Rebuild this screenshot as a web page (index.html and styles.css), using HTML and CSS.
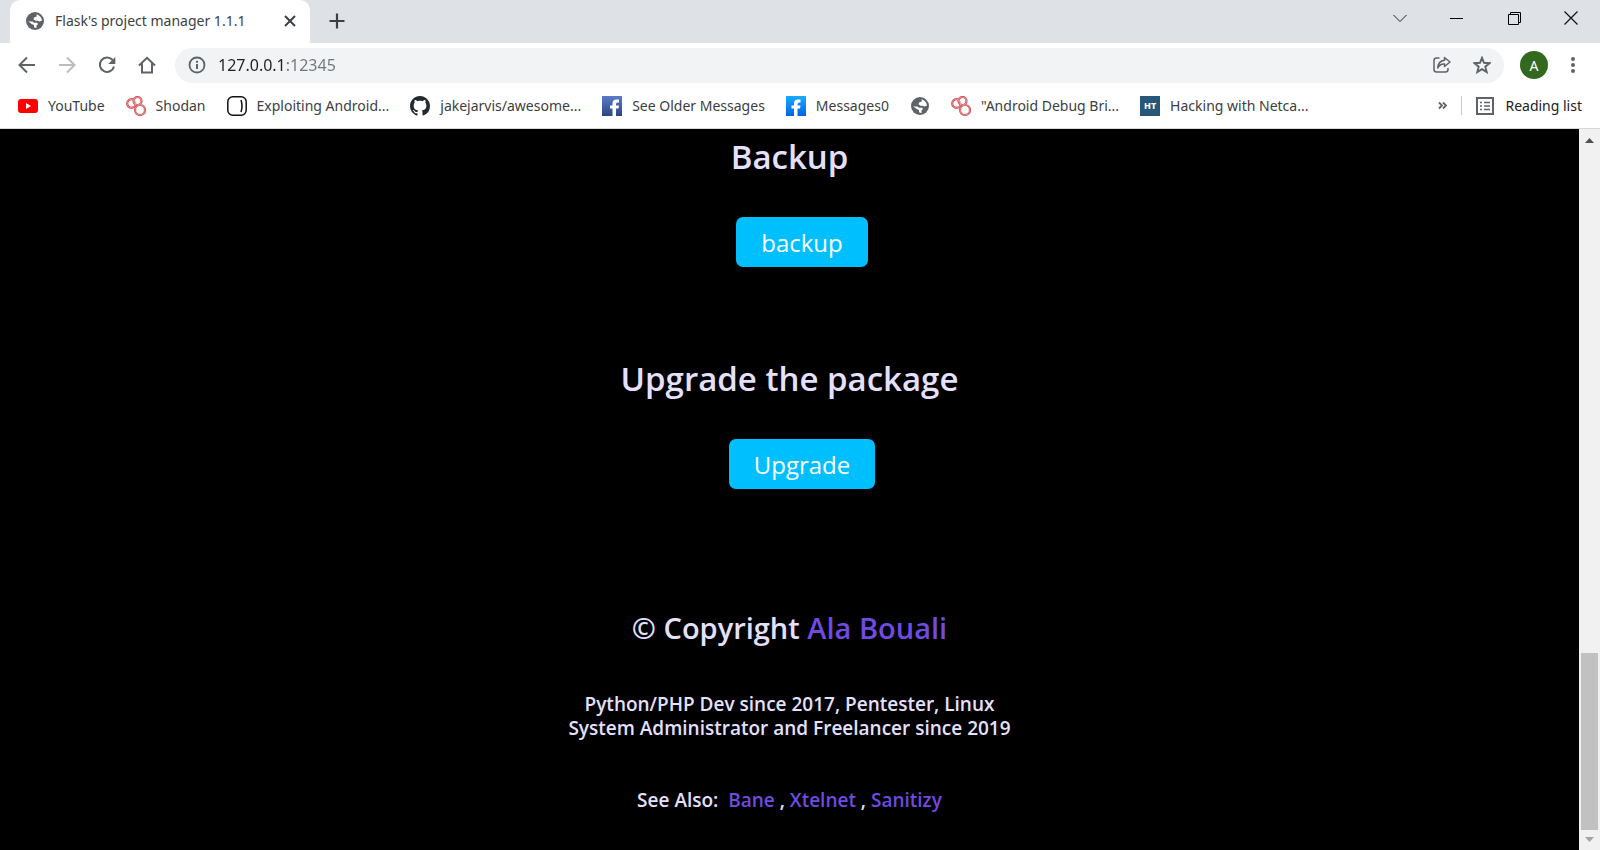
FILE: index.html
```html
<!DOCTYPE html>
<html lang="en">
<head>
<meta charset="utf-8">
<meta name="viewport" content="width=device-width, initial-scale=1">
<title>Flask's project manager 1.1.1</title>
<link rel="stylesheet" href="styles.css">
</head>
<body>
<svg class="symbols" aria-hidden="true">
  <symbol id="globe" viewBox="0 0 18 18">
    <circle cx="9" cy="9" r="9" fill="#5f6368"/>
    <path d="M10.500 2.200Q15.200 3.600 16 8.500L13.500 9.500 11.500 8.800H9.500L7.500 7.200 8 5.500 10.800 4.500Z" fill="#fff"/>
    <path d="M2 9.500H6.500L8 10.800H11L12 12 10.500 13.500V16Q8.500 16 8 15V13L5.500 12 4.500 11Z" fill="#fff"/>
  </symbol>
  <symbol id="shodan" viewBox="0 0 20 20">
    <g fill="#fff" stroke="#d04a50" stroke-width="2.200"><circle cx="5.500" cy="7.500" r="4.300"/><circle cx="11.500" cy="5" r="4"/><circle cx="14" cy="14" r="5"/></g>
    <g fill="none" stroke="#e9a0a4" stroke-width=".8"><circle cx="5.500" cy="7.500" r="4.300"/><circle cx="11.500" cy="5" r="4"/><circle cx="14" cy="14" r="5"/></g>
  </symbol>
</svg>
<header class="browser">
  <div class="tabstrip">
    <div class="tab">
      <svg class="i18"><use href="#globe"/></svg>
      <span class="tab-title">Flask's project manager 1.1.1</span>
      <button class="icon-btn tab-close" aria-label="Close tab"><svg class="i18" viewBox="0 0 18 18"><path d="m4 4 10 10M14 4 4 14" stroke="#3c4043" stroke-width="2"/></svg></button>
    </div>
    <button class="icon-btn new-tab" aria-label="New tab"><svg class="i18" viewBox="0 0 18 18"><path d="M9 1.500v15M1.500 9h15" stroke="#3c4043" stroke-width="2.200"/></svg></button>
    <div class="window-controls">
      <button class="icon-btn" aria-label="Search tabs"><svg viewBox="0 0 14 14"><path d="m.5 4 6.500 6.500L13.500 4" fill="none" stroke="#222"/></svg></button>
      <button class="icon-btn" aria-label="Minimize"><svg viewBox="0 0 14 14"><path d="M0 7.500h13" stroke="#000"/></svg></button>
      <button class="icon-btn" aria-label="Restore"><svg viewBox="0 0 14 14"><path d="M1.500 3.500h10v10h-10zM3.500 3V1.500h10v10H12" fill="none" stroke="#000"/></svg></button>
      <button class="icon-btn" aria-label="Close"><svg viewBox="0 0 14 14"><path d="m.5 .5 13 13M13.500 .5l-13 13" stroke="#111" stroke-width="1.200"/></svg></button>
    </div>
  </div>
  <div class="toolbar">
    <nav class="nav-buttons" aria-label="Navigation">
      <button class="icon-btn" aria-label="Back"><svg class="i18" viewBox="0 0 18 18"><path d="M17 9H2M9 1.500 1.500 9 9 16.500" fill="none" stroke="#5f6368" stroke-width="2"/></svg></button>
      <button class="icon-btn" aria-label="Forward" disabled><svg class="i18" viewBox="0 0 18 18"><path d="M1 9h15M9 1.500 16.500 9 9 16.500" fill="none" stroke="#babcbe" stroke-width="2"/></svg></button>
      <button class="icon-btn" aria-label="Reload"><svg class="i18" viewBox="0 0 18 18"><path d="M14.500 4A7.200 7.200 0 1 0 16 10.500" fill="none" stroke="#5f6368" stroke-width="2"/><path d="M17.300 1v7h-7z" fill="#5f6368"/></svg></button>
      <button class="icon-btn" aria-label="Home"><svg class="i18" viewBox="0 0 18 18"><path d="M1 9.500 9 1.800l8 7.700M4 7.500v9h10v-9" fill="none" stroke="#5f6368" stroke-width="2"/></svg></button>
    </nav>
    <div class="omnibox">
      <svg class="i18" viewBox="0 0 18 18"><circle cx="9" cy="9" r="7.500" fill="none" stroke="#5f6368" stroke-width="1.800"/><path d="M9 8v5M9 4.800v1.900" stroke="#5f6368" stroke-width="2"/></svg>
      <input class="address" type="text" aria-label="Address" value="127.0.0.1:12345">
      <button class="icon-btn" aria-label="Share"><svg class="i18" viewBox="0 0 18 18"><path d="M6.500 2H3.500Q1 2 1 4.500v9Q1 16 3.500 16h9q2.500 0 2.500-2.500V12" fill="none" stroke="#5f6368" stroke-width="1.500"/><path d="M11.500 1.500 17 6l-5.500 4.500V8Q7 7.500 4.800 12 5 5 11.500 4.200Z" fill="none" stroke="#5f6368" stroke-width="1.500" stroke-linejoin="round"/></svg></button>
      <button class="icon-btn" aria-label="Bookmark this page"><svg class="i18" viewBox="0 0 18 18"><path d="m9 1.800 2 5 5.500.4-4.200 3.500 1.400 5.400L9 13.200l-4.700 2.900 1.400-5.400L1.500 7.200 7 6.800Z" fill="none" stroke="#5f6368" stroke-width="1.900"/></svg></button>
    </div>
    <button class="avatar" aria-label="Profile">A</button>
    <button class="icon-btn" aria-label="Menu"><svg class="i18" viewBox="0 0 18 18"><g fill="#5f6368"><circle cx="9" cy="3" r="2"/><circle cx="9" cy="9" r="2"/><circle cx="9" cy="15" r="2"/></g></svg></button>
  </div>
  <nav class="bookmarks" aria-label="Bookmarks">
    <a href="#"><svg class="i20" viewBox="0 0 20 20"><rect y="3" width="20" height="14" rx="3" fill="#f00"/><path d="m8 7 5 3-5 3z" fill="#fff"/></svg>YouTube</a>
    <a href="#"><svg class="i20"><use href="#shodan"/></svg>Shodan</a>
    <a href="#"><svg class="i20" viewBox="0 0 20 20"><rect x=".8" y=".8" width="18.400" height="18.400" rx="5" fill="#fff" stroke="#111" stroke-width="1.500"/><path d="M14 4q2 6 0 12" fill="none" stroke="#111" stroke-width="1.500"/></svg>Exploiting Android...</a>
    <a href="#"><svg class="i20" viewBox="0 0 16 16"><path fill="#24292e" d="M8 0C3.580 0 0 3.580 0 8c0 3.540 2.290 6.530 5.470 7.590.4.070.55-.17.55-.38 0-.19-.01-.82-.01-1.490-2.010.37-2.530-.49-2.690-.94-.09-.23-.48-.94-.82-1.130-.28-.15-.68-.52-.01-.53.63-.01 1.080.58 1.230.82.72 1.210 1.870.87 2.330.66.070-.52.28-.87.51-1.070-1.780-.2-3.640-.89-3.640-3.950 0-.87.31-1.590.82-2.150-.08-.2-.36-1.020.08-2.120 0 0 .67-.21 2.200.82.64-.18 1.320-.27 2-.27s1.360.09 2 .27c1.530-1.040 2.200-.82 2.200-.82.44 1.100.16 1.920.08 2.120.51.56.82 1.270.82 2.150 0 3.070-1.870 3.750-3.650 3.950.29.25.54.73.54 1.480 0 1.070-.01 1.930-.01 2.200 0 .21.15.46.55.38A8.010 8.010 0 0 0 16 8c0-4.420-3.580-8-8-8z"/></svg>jakejarvis/awesome...</a>
    <a href="#"><svg class="i20" viewBox="0 0 20 20"><defs><linearGradient id="fb1" x2="0" y2="1"><stop stop-color="#5a7cc8"/><stop offset="1" stop-color="#2b4583"/></linearGradient></defs><path fill="url(#fb1)" d="M0 0h20v20H0z"/><path d="M10.500 20v-7.500H8V9.500h2.500V7.500q0-4 4-4H17v3h-1.500q-1.500 0-1.500 1.500v1.500h3l-.5 3H14V20z" fill="#fff"/></svg>See Older Messages</a>
    <a href="#"><svg class="i20" viewBox="0 0 20 20"><defs><linearGradient id="fb2" x2="0" y2="1"><stop stop-color="#18acfe"/><stop offset="1" stop-color="#0163e0"/></linearGradient></defs><path fill="url(#fb2)" d="M0 0h20v20H0z"/><path d="M8 20v-7.500H5.500V9.500H8V7.500q0-4 4-4h2.500v3H13q-1.500 0-1.500 1.500v1.500h3l-.5 3h-2.500V20z" fill="#fff"/></svg>Messages0</a>
    <a href="#" aria-label="Saved page"><svg class="i20" viewBox="-1 -1 20 20"><use href="#globe" width="18" height="18"/></svg></a>
    <a href="#"><svg class="i20"><use href="#shodan"/></svg>"Android Debug Bri...</a>
    <a href="#"><span class="ht">HT</span>Hacking with Netca...</a>
    <button class="icon-btn more" aria-label="More bookmarks"><svg viewBox="0 0 14 14"><path d="m3 3.500 3 3-3 3M7 3.500l3 3-3 3" fill="none" stroke="#5f6368" stroke-width="1.800"/></svg></button>
    <button class="reading"><svg class="i18" viewBox="0 0 18 18"><path d="M1 1h16v16H1z" fill="none" stroke="#5f6368" stroke-width="2"/><path d="M4 5.500h2M4 9h2M4 12.500h2M8 5.500h6M8 9h6M8 12.500h6" stroke="#5f6368" stroke-width="1.600"/></svg>Reading list</button>
  </nav>
</header>
<div class="viewport">
  <main class="page">
    <form class="action">
      <h2>Backup</h2>
      <button type="button">backup</button>
    </form>
    <form class="action">
      <h2>Upgrade the package</h2>
      <button type="button">Upgrade</button>
    </form>
    <footer>
      <h3>© Copyright <a href="#">Ala Bouali</a></h3>
      <p>Python/PHP Dev since 2017, Pentester, Linux<br>System Administrator and Freelancer since 2019</p>
      <p>See Also:&nbsp; <a href="#">Bane</a> , <a href="#">Xtelnet</a> , <a href="#">Sanitizy</a></p>
    </footer>
  </main>
  <div class="scrollbar" aria-hidden="true">
    <svg viewBox="0 0 21 20"><path d="m6 14 4.500-5 4.500 5z" fill="#505050"/></svg>
    <div class="track"><div class="thumb"></div></div>
    <svg viewBox="0 0 21 20"><path d="m6 7 4.500 5L15 7z" fill="#a3a3a3"/></svg>
  </div>
</div>
</body>
</html>
```
FILE: styles.css
```css
* { box-sizing: border-box; }

body {
  margin: 0;
  min-height: 100vh;
  display: flex;
  flex-direction: column;
  font-family: "Noto Sans", "Open Sans", sans-serif;
  font-size: 14px;
  color: #3c4043;
  background: #000;
}

button, input { font: inherit; color: inherit; border: 0; margin: 0; padding: 0; background: none; }
a { color: inherit; text-decoration: none; }
svg { display: block; flex: none; width: 14px; height: 14px; }
.symbols { position: absolute; width: 0; height: 0; }
.i18 { width: 18px; height: 18px; }
.i20 { width: 20px; height: 20px; }
.icon-btn { display: flex; align-items: center; justify-content: center; flex: none; }

.browser { background: #fff; border-bottom: 1px solid #d5d7da; }

.tabstrip { display: flex; height: 43px; padding-left: 10px; background: #dee1e6; }
.tab {
  display: flex;
  align-items: center;
  width: 300px;
  padding: 0 11px 2px 16px;
  background: #fff;
  border-radius: 10px 10px 0 0;
}
.tab-title { flex: 1; margin-left: 11px; white-space: nowrap; }
.new-tab { width: 54px; padding-bottom: 1px; }
.window-controls { display: flex; margin-left: auto; padding: 0 1px 7px 0; }
.window-controls .icon-btn { width: 57px; }

.toolbar { display: flex; align-items: center; gap: 16px; height: 44px; padding: 0 18px; }
.nav-buttons { display: flex; gap: 22px; }
.omnibox {
  display: flex;
  align-items: center;
  flex: 1;
  gap: 22px;
  height: 35px;
  margin-left: 3px;
  padding: 0 13px;
  border-radius: 18px;
  background: #f1f3f4;
}
.address {
  flex: 1;
  min-width: 0;
  margin-left: -10px;
  font-size: 16px;
  color: transparent;
  background: linear-gradient(to right, #202124 69px, #71757a 69px);
  -webkit-background-clip: text;
  background-clip: text;
}
.avatar { width: 28px; height: 28px; border-radius: 50%; background: #33691e; color: #fff; flex: none; }

.bookmarks { display: flex; align-items: center; gap: 21px; height: 41px; padding: 0 18px 4px; white-space: nowrap; }
.bookmarks a { display: flex; align-items: center; gap: 10px; }
.ht {
  width: 20px;
  height: 20px;
  background: #27587a;
  color: #fff;
  font-size: 9px;
  font-weight: 800;
  line-height: 20px;
  text-align: center;
}
.more { margin-left: auto; margin-right: -10px; }
.reading { display: flex; align-items: center; gap: 11px; padding-left: 14px; border-left: 1px solid #c8cbce; color: #202124; }

.viewport { display: flex; flex: 1; }
.page { flex: 1; text-align: center; color: #e6e0ff; font-family: "Open Sans", "Noto Sans", sans-serif; font-weight: 600; }
.action { display: flex; flex-direction: column; align-items: center; height: 222px; }
.action h2 { margin: 4px 0 36px; font-size: 33px; line-height: 48px; font-weight: 600; }
.action button {
  height: 50px;
  margin-left: 25px;
  padding: 0 25px;
  border-radius: 7px;
  background: #00bfff;
  color: #fff;
  font-size: 24px;
  font-weight: 400;
}
.page footer { padding-top: 35px; font-size: 19px; line-height: 24px; }
.page h3 { margin: 0 0 44px; font-size: 29px; line-height: 40px; font-weight: 600; }
.page p { margin: 0 0 48px; }
.page p:last-child { margin: 0; }
.page a { color: #6f4be0; }

.scrollbar { display: flex; flex-direction: column; width: 21px; background: #f1f1f1; }
.scrollbar svg { width: 21px; height: 20px; }
.track { display: flex; flex: 1; align-items: flex-end; padding: 0 2px; }
.thumb { width: 100%; height: 26%; background: #c1c1c1; }
```
